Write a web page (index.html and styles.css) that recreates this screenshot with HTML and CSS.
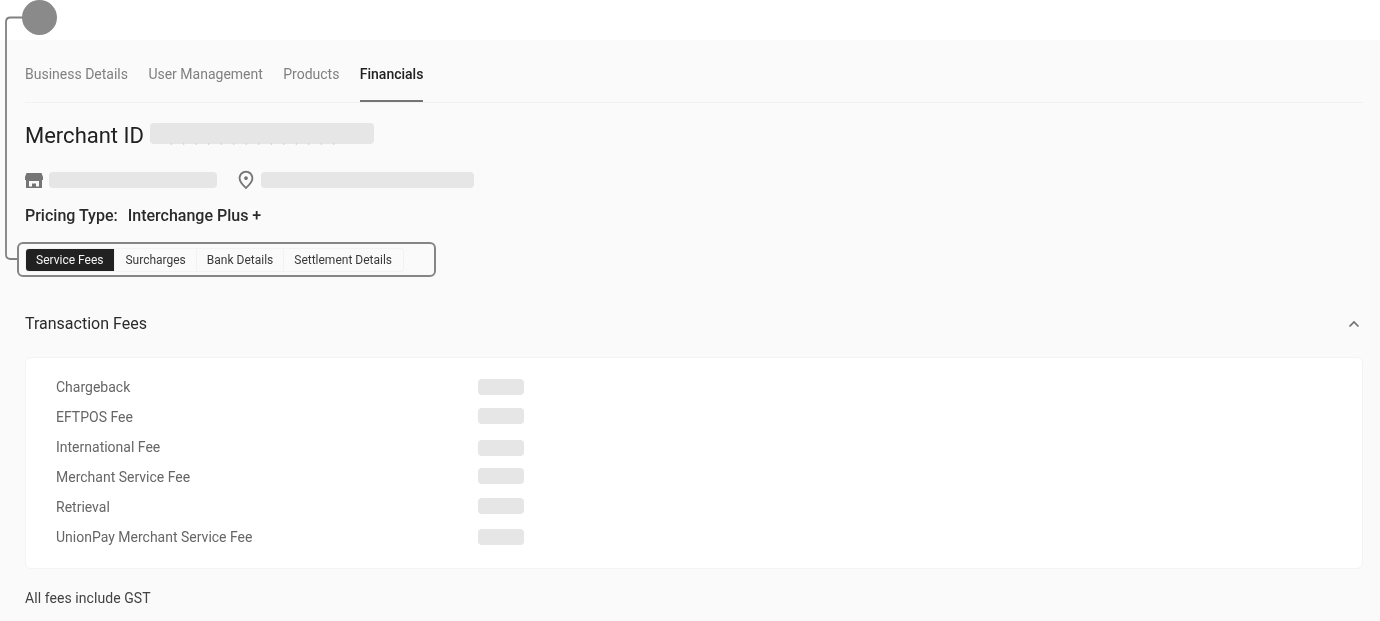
FILE: index.html
```html
<!DOCTYPE html>
<html lang="en">
<head>
<meta charset="utf-8">
<title>Financials</title>
<link rel="stylesheet" href="styles.css">
</head>
<body>
<div class="marker"></div>
<svg class="connector" width="24" height="262" viewBox="0 0 24 262" fill="none">
  <path d="M24 17.5H10.5Q6 17.5 6 22V254.500Q6 259 10.500 259H17"/>
</svg>
<div class="highlight"></div>
<div class="top"></div>
<main class="panel">
  <nav class="tabs">
    <a class="tab">Business Details</a>
    <a class="tab">User Management</a>
    <a class="tab">Products</a>
    <a class="tab active">Financials</a>
  </nav>
  <h1 class="title">Merchant ID <span class="skel skel-id"></span></h1>
  <div class="meta">
    <svg class="ico-store" width="18" height="15" viewBox="0 0 18 15"><path fill-rule="evenodd" d="M1.500 0H16.500L18 4V7H17V15H1V7H0V4ZM4 8V13.500H7V10.500H11V13.500H14V8Z"/></svg>
    <span class="skel skel-name"></span>
    <svg class="ico-pin" width="22" height="22" viewBox="0 0 24 24"><path d="M12 12c-1.100 0-2-.9-2-2s.9-2 2-2 2 .9 2 2-.9 2-2 2zm6-1.800C18 6.570 15.350 4 12 4s-6 2.570-6 6.200c0 2.340 1.950 5.440 6 9.140 4.050-3.700 6-6.800 6-9.140zM12 2c4.200 0 8 3.220 8 8.200 0 3.320-2.670 7.250-8 11.800-5.330-4.550-8-8.480-8-11.800C4 5.220 7.800 2 12 2z"/></svg>
    <span class="skel skel-addr"></span>
  </div>
  <p class="pricing"><span>Pricing Type:</span><span>Interchange Plus +</span></p>
  <div class="segments">
    <a class="seg seg-on">Service Fees</a>
    <a class="seg">Surcharges</a>
    <a class="seg">Bank Details</a>
    <a class="seg">Settlement Details</a>
  </div>
  <div class="section-head">
    <h2>Transaction Fees</h2>
    <svg class="chev" width="12" height="8" viewBox="0 0 12 8" fill="none"><path d="M1.500 6.500L6 2L10.500 6.500"/></svg>
  </div>
  <section class="card">
    <div class="row"><span class="label">Chargeback</span><span class="skel skel-fee"></span></div>
    <div class="row"><span class="label">EFTPOS Fee</span><span class="skel skel-fee up"></span></div>
    <div class="row"><span class="label">International Fee</span><span class="skel skel-fee down"></span></div>
    <div class="row"><span class="label">Merchant Service Fee</span><span class="skel skel-fee up"></span></div>
    <div class="row"><span class="label">Retrieval</span><span class="skel skel-fee up"></span></div>
    <div class="row"><span class="label">UnionPay Merchant Service Fee</span><span class="skel skel-fee"></span></div>
  </section>
  <p class="note">All fees include GST</p>
</main>
</body>
</html>
```
FILE: styles.css
```css
* { box-sizing: border-box; }
html, body { margin: 0; height: 621px; overflow: hidden; }
body { background: #fff; font-family: Roboto, "Liberation Sans", sans-serif; color: #212121; position: relative; filter: blur(0.35px); }

.top { height: 40px; background: #fff; }
.panel { height: 581px; background: #fafafa; padding: 0 17px 0 25px; }

.marker { position: absolute; left: 22px; top: 0; width: 35px; height: 35px; border-radius: 50%; background: #8a8a8a; z-index: 2; }
.connector { position: absolute; left: 0; top: 0; z-index: 1; }
.connector path { stroke: #808080; stroke-width: 1.800; }
.highlight { position: absolute; left: 16.500px; top: 241.500px; width: 419px; height: 35px; border: 2px solid #858585; border-radius: 6px; z-index: 1; }

.tabs { display: flex; gap: 20.400px; height: 63px; border-bottom: 1px solid #f1f1f1; }
.tab { font-size: 14px; line-height: 20px; padding-top: 24px; color: #808080; height: 62px; }
.tab.active { color: #212121; font-weight: 500; border-bottom: 2px solid #757575; }

.title { margin: 19px 0 0; font-size: 22px; font-weight: 400; line-height: 28px; height: 28px; display: flex; gap: 6px; color: #212121; white-space: nowrap; }
.skel { display: block; background: #e6e6e6; border-radius: 4px; flex: none; }
.skel-id { width: 224px; height: 21px; margin-top: 1px; position: relative; }
.skel-id::after { content: ""; position: absolute; left: 15px; top: 20px; width: 170px; height: 2px; background: radial-gradient(circle, #cfcfcf 0.7px, transparent 1px) 0 0 / 12.500px 2px repeat-x; }

.meta { display: flex; align-items: center; margin-top: 21px; height: 18px; }
.ico-store { fill: #757575; flex: none; }
.ico-pin { fill: #757575; flex: none; margin-left: 17.500px; }
.skel-name { width: 168px; height: 16px; margin-left: 6px; }
.skel-addr { width: 213px; height: 16px; margin-left: 4.500px; }

.pricing { margin: 16px 0 0; font-size: 16px; font-weight: 500; line-height: 22px; display: flex; gap: 10px; color: #2a2a2a; }

.segments { display: flex; margin-top: 21px; width: 379px; height: 24px; border: 1px solid #f2f2f2; border-radius: 3px; }
.seg { font-size: 12px; line-height: 22px; padding: 0 10px; color: #3a3a3a; border-right: 1px solid #f2f2f2; white-space: nowrap; }
.seg:last-child { border-right: 0; }
.seg-on { background: #212121; color: #f5f5f5; border-radius: 3px 0 0 3px; padding-right: 11px; }

.section-head { display: flex; align-items: center; justify-content: space-between; margin-top: 40px; height: 24px; padding-right: 3px; }
.section-head h2 { margin: 0 0 2px; font-size: 16px; font-weight: 400; color: #2a2a2a; }
.chev path { stroke: #707070; stroke-width: 1.700; }

.card { background: #fff; border: 1px solid #f3f3f3; border-radius: 6px; margin-top: 21px; height: 212px; padding: 14px 30px; }
.row { display: grid; grid-template-columns: 422px 46px; align-items: center; height: 30px; }
.label { font-size: 14px; color: #666; }
.skel-fee { width: 46px; height: 16px; }
.skel-fee.up { margin-bottom: 2px; }
.skel-fee.down { margin-top: 2px; }

.note { margin: 20px 0 0; font-size: 14px; line-height: 18px; color: #424242; letter-spacing: 0.005em; }
```
